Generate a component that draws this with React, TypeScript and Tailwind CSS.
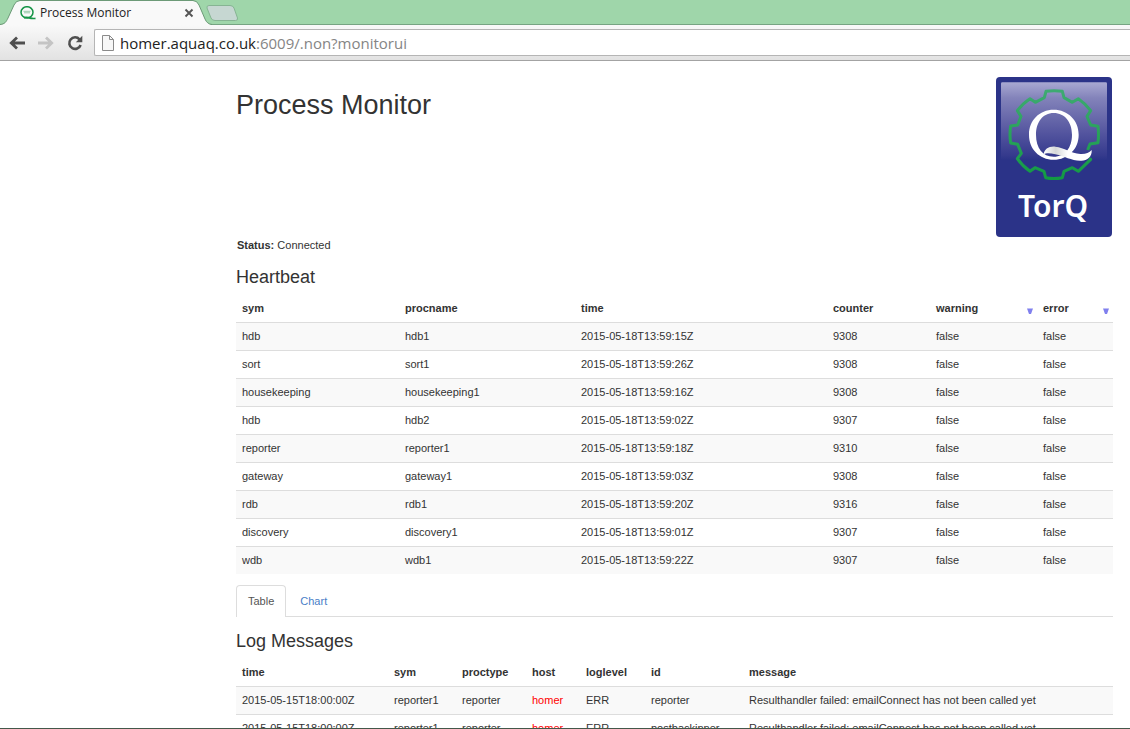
import React, { useState } from "react";

const heartbeats = [
  ["hdb", "hdb1", "2015-05-18T13:59:15Z", "9308", "false", "false"],
  ["sort", "sort1", "2015-05-18T13:59:26Z", "9308", "false", "false"],
  ["housekeeping", "housekeeping1", "2015-05-18T13:59:16Z", "9308", "false", "false"],
  ["hdb", "hdb2", "2015-05-18T13:59:02Z", "9307", "false", "false"],
  ["reporter", "reporter1", "2015-05-18T13:59:18Z", "9310", "false", "false"],
  ["gateway", "gateway1", "2015-05-18T13:59:03Z", "9308", "false", "false"],
  ["rdb", "rdb1", "2015-05-18T13:59:20Z", "9316", "false", "false"],
  ["discovery", "discovery1", "2015-05-18T13:59:01Z", "9307", "false", "false"],
  ["wdb", "wdb1", "2015-05-18T13:59:22Z", "9307", "false", "false"],
];

const logs = [
  ["2015-05-15T18:00:00Z", "reporter1", "reporter", "homer", "ERR", "reporter", "Resulthandler failed: emailConnect has not been called yet"],
  ["2015-05-15T18:00:00Z", "reporter1", "reporter", "homer", "ERR", "postbackinner", "Resulthandler failed: emailConnect has not been called yet"],
];

type Column = { name: string; width: string; sortable?: boolean; red?: boolean };

const heartbeatColumns: Column[] = [
  { name: "sym", width: "w-[163px]" },
  { name: "procname", width: "w-[176px]" },
  { name: "time", width: "w-auto" },
  { name: "counter", width: "w-[103px]" },
  { name: "warning", width: "w-[107px]", sortable: true },
  { name: "error", width: "w-[76px]", sortable: true },
];

const logColumns: Column[] = [
  { name: "time", width: "w-[152px]" },
  { name: "sym", width: "w-[68px]" },
  { name: "proctype", width: "w-[70px]" },
  { name: "host", width: "w-[54px]", red: true },
  { name: "loglevel", width: "w-[65px]" },
  { name: "id", width: "w-[98px]" },
  { name: "message", width: "w-auto" },
];

function DataTable({ label, columns, rows }: { label: string; columns: Column[]; rows: string[][] }) {
  return (
    <table aria-label={label} className="w-full table-fixed border-separate border-spacing-0 text-left">
      <thead>
        <tr>
          {columns.map((c) => (
            <th key={c.name} scope="col" className={`h-7 pl-1.5 pr-1 font-bold ${c.width}`}>
              {c.sortable ? (
                <button type="button" className="flex w-full items-end justify-between font-bold">
                  {c.name}
                  <svg viewBox="0 0 6 6" className="mb-0.5 h-1.5 w-1.5" aria-hidden="true">
                    <path d="M0 0.5h6L4 6H2z" fill="#8080ee" />
                  </svg>
                </button>
              ) : (
                c.name
              )}
            </th>
          ))}
        </tr>
      </thead>
      <tbody>
        {rows.map((row, i) => (
          <tr key={i} className="odd:bg-[#f9f9f9]">
            {row.map((cell, j) => (
              <td
                key={j}
                className={`h-7 whitespace-nowrap border-t border-[#ddd] pb-0.5 pl-1.5 ${columns[j].red ? "text-[#ff0000]" : ""}`}
              >
                {cell}
              </td>
            ))}
          </tr>
        ))}
      </tbody>
    </table>
  );
}

function TorqLogo() {
  return (
    <svg viewBox="0 0 116 160" className="h-40 w-[116px] shrink-0" role="img" aria-label="TorQ">
      <defs>
        <linearGradient id="sheen" x1="0" y1="0" x2="0" y2="1">
          <stop offset="0" stopColor="#a9a9d2" />
          <stop offset="0.2" stopColor="#8383ba" />
          <stop offset="0.65" stopColor="#54559f" />
          <stop offset="0.94" stopColor="#353a8d" />
          <stop offset="1" stopColor="#2b3388" />
        </linearGradient>
        <linearGradient id="gear" x1="0" y1="0" x2="0" y2="1">
          <stop offset="0" stopColor="#3eaa72" />
          <stop offset="1" stopColor="#129a43" />
        </linearGradient>
        <linearGradient id="tail" x1="0" y1="0" x2="1" y2="0">
          <stop offset="0" stopColor="#ffffff" />
          <stop offset="0.25" stopColor="#d5d8d8" />
          <stop offset="0.5" stopColor="#ffffff" />
        </linearGradient>
      </defs>
      <rect width="116" height="160" rx="4" fill="#2b3388" />
      <g transform="translate(-11 -7) scale(0.33333)">
        <rect x="48" y="37" width="318" height="233" rx="4" fill="url(#sheen)" />
        <path
          d="M312 266L317 268L280 304L262 293L237 304L232 323Q207 328 182 323L177 304L150 293L135 304Q112 288 97 266L109 250L98 223L77 219Q73 194 77 168L98 165L108 139L97 122Q112 101 135 86L151 97L178 83L183 64Q207 60 232 64L237 83L262 97L280 86Q302 101 317 122L306 139L317 165L339 169Q342 194 339 218L315 222L308 240"
          fill="none"
          stroke="url(#gear)"
          strokeWidth="9"
          strokeLinejoin="round"
        />
        <path
          fillRule="evenodd"
          fill="#fff"
          d="M206 119C249 119 281 151 281 194C281 237 249 269 206 269C163 269 132 237 132 194C132 151 163 119 206 119ZM206 129C173 129 153 157 153 194C153 233 173 260 206 260C240 260 261 233 261 194C261 157 240 129 206 129Z"
        />
        <path
          fill="url(#tail)"
          d="M176 253C178 237 192 228 211 230C238 233 258 250 286 252C302 253 312 248 320 240C322 259 307 272 289 272C260 273 239 259 211 253C196 249 184 248 176 253Z"
        />
      </g>
      <text x="57" y="140" textAnchor="middle" fill="#fff" fontSize="30" fontWeight="600" fontFamily="'Noto Sans', sans-serif">
        TorQ
      </text>
    </svg>
  );
}

function BrowserChrome() {
  return (
    <header className="shrink-0 font-['Open_Sans',sans-serif]">
      <div className="flex h-[25px] border-b border-[#76a482] bg-[#9fd6aa]">
        <div className="relative flex h-[25px] w-[212px] shrink-0 items-center pl-5 pr-[18px]">
          <svg viewBox="0 0 212 25" className="absolute inset-0 h-[25px] w-[212px]" aria-hidden="true">
            <path d="M0 25C5 24 6 22 8 18L14 5Q16 1 20 1H193Q197 1 199 5L205 19Q207 24 212 25Z" fill="#f9f9f9" />
            <path d="M0 24.5C5 24 6 22 8 18L14 5Q16 .5 20 .5H193Q197 .5 199 5L205 19Q207 24 212 24.5" fill="none" stroke="#6c9a77" />
          </svg>
          <svg viewBox="0 0 16 14" className="relative h-3.5 w-4 shrink-0" aria-hidden="true">
            <ellipse cx="7" cy="6.3" rx="6" ry="5.6" fill="none" stroke="#169447" strokeWidth="1.5" />
            <path d="M4 12C7 9.500 9 13.500 15.500 12.300" fill="none" stroke="#169447" strokeWidth="1.7" />
            <path d="M3.500 5.300h7M4 6.800h6" stroke="#8cc5a2" strokeWidth="0.9" />
          </svg>
          <span className="relative ml-1 flex-1 whitespace-nowrap text-xs text-[#222]">Process Monitor</span>
          <button type="button" aria-label="Close tab" className="relative">
            <svg viewBox="0 0 10 10" className="h-2.5 w-2.5" aria-hidden="true">
              <path d="M1.5 1.5L8.5 8.5M8.5 1.5L1.5 8.5" stroke="#555" strokeWidth="1.9" />
            </svg>
          </button>
        </div>
        <button type="button" aria-label="New tab" className="-ml-1.5 mt-[5px] h-4">
          <svg viewBox="0 0 33 16" className="h-4 w-[33px]" aria-hidden="true">
            <path d="M3 .5H24Q27 .5 28 3L31.5 13Q32 15.500 29.500 15.500H9Q6 15.500 5 13L1 3Q.5 .5 3 .5Z" fill="#c6d7d2" stroke="#86b493" />
          </svg>
        </button>
      </div>
      <div className="flex h-9 items-start border-b border-[#a3a3a3] bg-linear-to-b from-[#f9f9f9] to-[#e2e2e2] pt-1">
        <nav aria-label="Browser" className="flex h-[27px] w-[94px] shrink-0 items-center gap-[13px] pl-[9px]">
          <button type="button" aria-label="Back">
            <svg viewBox="0 0 16 14" className="h-3.5 w-4" aria-hidden="true">
              <path d="M8 1.500L2.300 7L8 12.500M2.500 7H16" fill="none" stroke="#4f4f4f" strokeWidth="2.800" />
            </svg>
          </button>
          <button type="button" aria-label="Forward">
            <svg viewBox="0 0 16 14" className="h-3.5 w-4" aria-hidden="true">
              <path d="M8 1.500L13.700 7L8 12.500M13.500 7H0" fill="none" stroke="#c4c4c4" strokeWidth="2.800" />
            </svg>
          </button>
          <button type="button" aria-label="Reload">
            <svg viewBox="0 0 16 16" className="h-4 w-4" aria-hidden="true">
              <path d="M12.500 4.300A5.800 5.800 0 1 0 13.600 10" fill="none" stroke="#4f4f4f" strokeWidth="2.600" />
              <path d="M15.300 .8V7.200H8.800Z" fill="#4f4f4f" />
            </svg>
          </button>
        </nav>
        <div className="flex h-[27px] flex-1 items-center rounded-l-xs border border-r-0 border-[#b5b5b5] bg-white pl-[7px]">
          <svg viewBox="0 0 12 16" className="h-4 w-3 shrink-0" aria-hidden="true">
            <path d="M.5 .5H7.500L11.500 4.500V15.500H.5Z" fill="#f7f7f7" stroke="#8a8a8a" />
            <path d="M7.500 .5V4.500H11.500" fill="none" stroke="#8a8a8a" />
          </svg>
          <span className="ml-1.5 whitespace-nowrap text-[15px] leading-6 text-[#222]">
            homer.aquaq.co.uk<span className="text-[#858585]">:6009/.non?monitorui</span>
          </span>
        </div>
      </div>
    </header>
  );
}

export default function App() {
  const [tab, setTab] = useState("Table");
  const active = "rounded-t border border-b-0 border-[#ddd] bg-white text-[#555]";
  const idle = "border border-b-0 border-transparent text-[#4a80c8]";
  return (
    <div className="flex h-screen flex-col overflow-hidden border-b border-[#43584a] bg-white">
      <BrowserChrome />
      <main className="min-h-0 flex-1 overflow-hidden pl-[236px] pr-[17px] pt-4 font-['Liberation_Sans',Arial,sans-serif] text-[11px] leading-4 text-[#333]">
        <div className="flex items-start justify-between">
          <h1 className="mt-3 text-[27px] leading-8">Process Monitor</h1>
          <div className="pr-px">
            <TorqLogo />
          </div>
        </div>
        <p className="pl-px">
          <strong>Status:</strong> Connected
        </p>
        <h2 className="mb-[7px] mt-3.5 text-lg leading-5">Heartbeat</h2>
        <DataTable label="Heartbeat" columns={heartbeatColumns} rows={heartbeats} />
        <div role="tablist" className="mt-[11px] flex h-8 gap-0.5 border-b border-[#ddd]">
          {["Table", "Chart"].map((name) => (
            <button
              key={name}
              type="button"
              role="tab"
              aria-selected={tab === name}
              onClick={() => setTab(name)}
              className={`h-8 px-[11px] pb-0.5 ${tab === name ? active : idle}`}
            >
              {name}
            </button>
          ))}
        </div>
        <h2 className="mb-[7px] mt-3.5 text-lg leading-5">Log Messages</h2>
        <DataTable label="Log Messages" columns={logColumns} rows={logs} />
      </main>
    </div>
  );
}
